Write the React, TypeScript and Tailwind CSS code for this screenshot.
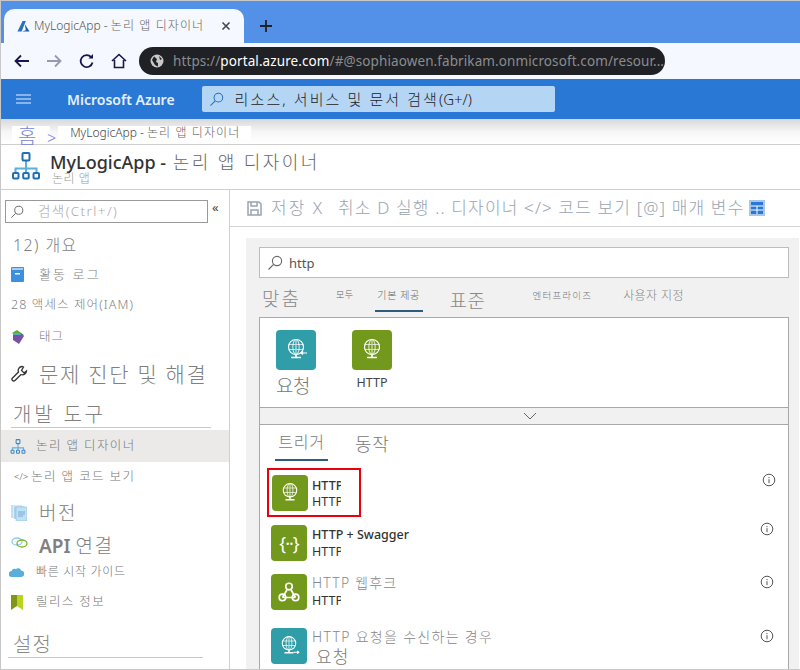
import React from "react";

const FONT = "[font-family:'Noto_Sans','Noto_Sans_CJK_KR',sans-serif]";

function Globe({ arrow, size = 40 }: { arrow?: "in" | "out"; size?: number }) {
  return (
    <svg width={size} height={size} viewBox="0 0 40 40" fill="none" stroke="#fff" strokeWidth="1.200">
      <circle cx="20" cy="17" r="7.500" />
      <ellipse cx="20" cy="17" rx="3.200" ry="7.500" strokeOpacity="0.700" />
      <path d="M12.800 14.500h14.400M12.800 19.500h14.400M20 9.500v15" strokeOpacity="0.700" />
      <path d="M20 24.500v3M15 27.500h10" strokeWidth="1.600" />
      {arrow === "in" && <path d="M31 23h-6m2-1.500L25 23l2 1.500" />}
      {arrow === "out" && <path d="M25 27h6m-2-1.500l2 1.500-2 1.500" />}
    </svg>
  );
}

function Tile({ color, size, children }: { color: string; size: "lg" | "md"; children: React.ReactNode }) {
  const cls = size === "lg" ? "w-10 h-10" : "w-9 h-9";
  return (
    <div className={`${cls} shrink-0 rounded-sm flex items-center justify-center`} style={{ backgroundColor: color }}>
      {children}
    </div>
  );
}

function LogicIcon({ size, stroke = "#1f6fb5" }: { size: number; stroke?: string }) {
  return (
    <svg width={size} height={size} viewBox="0 0 30 30" fill="none">
      <path d="M15 11v7M4.500 23v-4.500h21V23M15 18v5" stroke="#5bb0d8" strokeWidth="2" />
      <rect x="11.500" y="3" width="7" height="7.500" rx="1" stroke={stroke} strokeWidth="2" />
      <rect x="2" y="23" width="5.500" height="5.500" rx="1" stroke={stroke} strokeWidth="2" />
      <rect x="12.200" y="23" width="5.500" height="5.500" rx="1" stroke={stroke} strokeWidth="2" />
      <rect x="22.500" y="23" width="5.500" height="5.500" rx="1" stroke={stroke} strokeWidth="2" />
    </svg>
  );
}

function InfoIcon() {
  return (
    <svg width="14" height="14" viewBox="0 0 14 14" fill="none" stroke="#555" strokeWidth="1">
      <circle cx="7" cy="7" r="5.800" />
      <path d="M7 6.200v4M7 4v1.200" />
    </svg>
  );
}

function Search({ size = 16, color = "#666" }: { size?: number; color?: string }) {
  return (
    <svg width={size} height={size} viewBox="0 0 16 16" fill="none" stroke={color} strokeWidth="1.100">
      <circle cx="10" cy="6" r="4.600" />
      <path d="M6.600 9.400 1.500 14.500" />
    </svg>
  );
}

function SideRow({ h, icon, text, cls }: { h: string; icon?: React.ReactNode; text: React.ReactNode; cls: string }) {
  return (
    <div className={`${h} flex items-center shrink-0`}>
      {icon !== undefined && <div className="w-[38px] pl-[10px] shrink-0 flex items-center">{icon}</div>}
      <span className={`${cls} whitespace-nowrap text-[#808080]`}>{text}</span>
    </div>
  );
}

export default function App() {
  return (
    <div className={`${FONT} font-light w-[800px] h-[670px] overflow-hidden bg-white flex flex-col border-t border-l border-[#c8c8c8] border-b`}>
      {/* browser tab strip */}
      <div className="h-[42px] shrink-0 bg-[#5391e8] flex items-end pl-[3px]">
        <div className="w-[240px] h-[34px] bg-[#f5f8fe] rounded-t-[10px] flex items-center pl-[13px] pr-[13px] gap-[4px]">
          <svg width="13" height="13" viewBox="0 0 14 14">
            <path d="M6 1h3.500L5 12.500H.5z" fill="#2a6fc4" />
            <path d="M8.500 4.500 13.500 12.500H5.500l4-1.500z" fill="#1a5bab" />
          </svg>
          <span className="text-[12px] text-[#555] whitespace-nowrap flex-1">MyLogicApp - <span className="tracking-[1.100px] text-[#666]">논리 앱 디자이너</span></span>
          <svg width="10" height="10" viewBox="0 0 10 10" stroke="#445" strokeWidth="1.600">
            <path d="M1.500 1.500l7 7M8.500 1.500l-7 7" />
          </svg>
        </div>
        <svg className="ml-[15px] mb-[10px]" width="14" height="14" viewBox="0 0 14 14" stroke="#222" strokeWidth="1.800">
          <path d="M7 1v12M1 7h12" />
        </svg>
      </div>
      {/* toolbar */}
      <div className="h-[36px] shrink-0 bg-[#f5f8fe] flex items-center pl-[13px]">
        <svg width="16" height="14" viewBox="0 0 16 14" fill="none" stroke="#1b1451" strokeWidth="1.800"><path d="M15 7H2m5-5.500L1.500 7 7 12.500" /></svg>
        <svg className="ml-[16px]" width="16" height="14" viewBox="0 0 16 14" fill="none" stroke="#9a97b5" strokeWidth="1.800"><path d="M1 7h13M9 1.500 14.500 7 9 12.500" /></svg>
        <svg className="ml-[17px]" width="16" height="16" viewBox="0 0 16 16" fill="none" stroke="#1b1451" strokeWidth="1.800"><path d="M13.500 9.500a6 6 0 1 1-1.300-5.300" /><path d="M14 1v4.500H9.500z" fill="#1b1451" stroke="none" /></svg>
        <svg className="ml-[16px]" width="16" height="16" viewBox="0 0 16 16" fill="none" stroke="#1b1451" strokeWidth="1.600"><path d="M1 8 8 1.500 15 8M3.500 7v7.500h9V7" /></svg>
        <div className="ml-[12px] w-[526px] h-[28px] bg-[#202124] rounded-[14px] flex items-center pl-[11px] gap-[9px] font-normal">
          <svg width="14" height="14" viewBox="0 0 14 14"><circle cx="7" cy="7" r="6.500" fill="#c8c8c8" /><path d="M4 2.500 7 5l-1 3 2 1 0 3.500L5 11 2 6zM9 2l3 3-2 1z" fill="#202124" /></svg>
          <span className="text-[13.500px] text-[#8a8c90] whitespace-nowrap tracking-[0.100px]">https://<span className="text-white">portal.azure.com</span>/#@sophiaowen.fabrikam.onmicrosoft.com/resour...</span>
        </div>
      </div>
      {/* azure bar */}
      <div className="h-[40px] shrink-0 bg-[#2a78d6] flex items-center pl-[15px]">
        <svg width="15" height="12" viewBox="0 0 15 12" stroke="#a8c9f0" strokeWidth="1.400"><path d="M0 2h15M0 6h15M0 10h15" /></svg>
        <span className="ml-[36px] text-[14px] font-semibold text-[#e4effb] whitespace-nowrap">Microsoft Azure</span>
        <div className="ml-[27px] w-[353px] h-[26px] bg-[#b5d5f4] rounded-[2px] flex items-center pl-[7px] gap-[11px]">
          <Search size={15} color="#2a6fc4" />
          <span className="text-[15px] text-[#222] whitespace-nowrap tracking-[2.100px]">리소스, 서비스 및 문서 검색<span className="text-[15px] tracking-normal">(G+/)</span></span>
        </div>
      </div>
      {/* breadcrumb */}
      <div className="h-[26px] shrink-0 bg-gradient-to-b from-[#d8d8d8] via-[#f6f6f6] to-white flex items-start pl-[11px] pt-[7px] border-b border-[#cfcfcf]">
        <span className="bg-white w-[38px] h-[18px] text-[20px] leading-[22px] text-[#7a86d8] pl-[6px] overflow-visible">홈</span>
        <span className="text-[16px] leading-[20px] text-[#7a86d8] -ml-[3px] mt-[2px]">&gt;</span>
        <span className="bg-white ml-[2px] h-[14px] text-[12px] leading-[14px] text-[#444] whitespace-nowrap pl-[12px] pr-[11px]">MyLogicApp - <span className="tracking-[1.100px] text-[#666]">논리 앱 디자이너</span></span>
      </div>
      {/* title */}
      <div className="h-[45px] shrink-0 border-b border-[#cfcfcf] flex pl-[10px] pt-[5px]">
        <LogicIcon size={30} />
        <div className="ml-[9px] flex flex-col">
          <div className="text-[18px] leading-[20px] mt-[2px] whitespace-nowrap text-[#333]">
            <span className="font-medium">MyLogicApp -</span> <span className="text-[#666] tracking-[2.400px] ml-[2px]">논리 앱 디자이너</span>
          </div>
          <div className="text-[12px] leading-[14px] text-[#999] ml-[2px] tracking-[0.500px]">논리 앱</div>
        </div>
      </div>
      {/* body */}
      <div className="flex flex-1 min-h-0">
        {/* sidebar */}
        <div className="w-[229px] shrink-0 border-r border-[#d0d0d0] flex flex-col">
          <div className="flex pl-[4px] pt-[10px] h-[40px] shrink-0">
            <div className="w-[203px] h-[23px] border border-[#999] flex items-center pl-[4px] gap-[14px]">
              <Search size={14} />
              <span className="text-[13.500px] text-[#aaa] whitespace-nowrap tracking-[1.400px]">검색(Ctrl+/)</span>
            </div>
            <span className="ml-[4px] text-[13px] leading-[14px] text-[#444] font-normal">«</span>
          </div>
          <div className="pl-[12px]"><SideRow h="h-[30px]" text="12) 개요" cls="text-[16px] tracking-[1.400px]" /></div>
          <SideRow h="h-[29px]" text="활동 로그" cls="text-[13px] tracking-[2.100px]" icon={
            <svg width="13" height="15" viewBox="0 0 13 15"><rect width="13" height="15" rx="1" fill="#3d8fe0" /><rect x="1" y="1" width="11" height="2" fill="#a9cdf2" /><rect x="4" y="6" width="5" height="1.500" fill="#fff" /></svg>
          } />
          <div className="pl-[10px]"><SideRow h="h-[33px]" text="28 액세스 제어(IAM)" cls="text-[12.500px] tracking-[1.100px]" /></div>
          <SideRow h="h-[30px]" text="태그" cls="text-[12.500px] tracking-[1px]" icon={
            <svg width="14" height="15" viewBox="0 0 14 15"><path d="M6 0 13 5 8 8 1 3z" fill="#6aa82c" /><path d="M2 3h8l3 3-5 8-6-4z" fill="#7a4fa8" /><path d="M2 3l7 0 1 2H2z" fill="#4fb0c0" /></svg>
          } />
          <SideRow h="h-[42px]" text="문제 진단 및 해결" cls="text-[21px] tracking-[1.700px] mt-[4px]" icon={
            <svg width="17" height="17" viewBox="0 0 17 17" fill="none" stroke="#333" strokeWidth="1.300"><path d="M11 1.500a4 4 0 0 0-3.500 5.500L1.500 13a1.700 1.700 0 0 0 2.500 2.500l6-6A4 4 0 0 0 15.500 6L13 8 10.500 5.500l2-3.500z" /></svg>
          } />
          <div className="pl-[12px] h-[34px] shrink-0 flex flex-col justify-end mr-[18px]">
            <div className="text-[20px] leading-[24px] text-[#808080] whitespace-nowrap tracking-[2.800px]">개발 도구</div>
            <div className="h-[1px] bg-[#c8c8c8] -ml-[2px]" />
          </div>
          <div className="h-[32px] mt-[2px] shrink-0 bg-[#eceae8] flex items-center pl-[9px] gap-[10px]">
            <LogicIcon size={16} stroke="#3d85c6" />
            <span className="text-[12.500px] text-[#777] whitespace-nowrap tracking-[1.400px]">논리 앱 디자이너</span>
          </div>
          <div className="h-[30px] shrink-0 flex items-center pl-[13px] gap-[3px]">
            <span className="text-[9.500px] text-[#666]">&lt;/&gt;</span>
            <span className="text-[12.500px] text-[#777] whitespace-nowrap tracking-[1.400px]">논리 앱 코드 보기</span>
          </div>
          <SideRow h="h-[42px]" text="버전" cls="text-[19px] tracking-[1.500px]" icon={
            <svg width="16" height="16" viewBox="0 0 16 16"><rect width="11" height="13" fill="#c4dff3" /><rect x="2.500" y="1" width="11" height="13" fill="#a9d3ee" stroke="#fff" strokeWidth="0.500" /><rect x="5" y="2" width="11" height="14" fill="#bfe1f5" stroke="#7fbde4" strokeWidth="0.500" /><path d="M7 7h7M7 9h7M7 11h5" stroke="#7fa9c9" /></svg>
          } />
          <SideRow h="h-[25px]" text={<><span className="font-semibold">API</span> <span className="tracking-[1.500px]">연결</span></>} cls="text-[19px]" icon={
            <svg className="-mt-[8px]" width="17" height="11" viewBox="0 0 17 11" fill="none" strokeWidth="1.300"><ellipse cx="6" cy="4.500" rx="5" ry="3.500" stroke="#8ecbee" /><ellipse cx="11" cy="6.500" rx="5" ry="3.500" stroke="#7ab52e" /></svg>
          } />
          <div className="h-[25px] shrink-0 flex items-center pl-[8px] gap-[12px]">
            <svg width="15" height="11" viewBox="0 0 15 11"><path d="M3 11a3 3 0 0 1-.5-6A3.500 3.500 0 0 1 7 3a3 3 0 0 1 5 1.500A3.200 3.200 0 0 1 12 11z" fill="#5aaedb" /></svg>
            <span className="text-[12px] text-[#777] whitespace-nowrap tracking-[0.700px]">빠른 시작 가이드</span>
          </div>
          <div className="h-[36px] shrink-0 flex items-center pl-[10px] gap-[13px]">
            <svg width="12" height="15" viewBox="0 0 12 15"><path d="M0 0h6v15l-6 0z" fill="#7f9618" /><path d="M6 0h6v15L6 11z" fill="#b9d31f" /><path d="M0 15l6-4v4z" fill="#fff" /></svg>
            <span className="text-[12.500px] text-[#777] whitespace-nowrap tracking-[1.400px]">릴리스 정보</span>
          </div>
          <div className="ml-[7px] mr-[26px] mt-[12px] text-[20px] leading-[25px] text-[#888] pl-[5px] border-b border-[#c8c8c8] tracking-[1px]">설정</div>
        </div>
        {/* main */}
        <div className="flex-1 min-w-0 flex flex-col">
          <div className="h-[37px] shrink-0 border-b border-[#d4d4d4] flex items-center pl-[17px] gap-[9px] text-[17px] text-[#98a4b2] whitespace-nowrap">
            <svg width="15" height="15" viewBox="0 0 15 15" fill="none" stroke="#98a4b2" strokeWidth="1.500"><path d="M1 1h11l2 2v11H1zM4 1v4h6V1M4 14V9h7v5" /></svg>
            <span className="tracking-[2px]">저장 X</span>
            <span className="ml-[5px] tracking-[1.150px] -mr-[4px]">취소 D 실행 .. 디자이너 &lt;/&gt; 코드 보기 [@] 매개 변수</span>
            <svg width="16" height="16" viewBox="0 0 16 16"><rect width="16" height="16" fill="#a9c6e8" /><rect x="2" y="2" width="12" height="12" fill="#2a78d6" /><path d="M2 6h12M2 10h12M8 6v8" stroke="#fff" /></svg>
          </div>
          <div className="flex-1 min-h-0 pl-[16px] pr-[1px] pt-[11px]">
            <div className="h-full bg-[#f1f1f1] pl-[13px] pr-[10px] pt-[9px] flex flex-col">
              <div className="h-[31px] shrink-0 bg-white border border-[#bdbdbd] flex items-center pl-[7px] gap-[6px]">
                <Search size={16} />
                <span className="text-[13px] text-[#555] font-normal mt-[3px]">http</span>
              </div>
              {/* tabs */}
              <div className="h-[39px] shrink-0 flex items-start text-[#888] whitespace-nowrap">
                <span className="text-[19px] leading-[28px] mt-[7px] ml-[3px] tracking-[2px]">맞춤</span>
                <span className="text-[9px] leading-[13px] text-[#666] mt-[10px] ml-[35px] tracking-[0.500px]">모두</span>
                <div className="ml-[21px] w-[48px] h-[34px] border-b-2 border-[#2d5c7f] text-center text-[10px] leading-[13px] text-[#666] pt-[11px] tracking-[0.600px]">기본 제공</div>
                <span className="text-[19px] leading-[28px] mt-[9px] ml-[27px] tracking-[0.500px]">표준</span>
                <span className="text-[9.500px] leading-[13px] text-[#777] mt-[11px] ml-[47px] tracking-[1.200px]">엔터프라이즈</span>
                <span className="text-[12px] leading-[16px] text-[#888] mt-[10px] ml-[31px] tracking-[0.400px]">사용자 지정</span>
              </div>
              {/* results */}
              <div className="flex-1 min-h-0 bg-white border border-b-0 border-[#a8a8a8] flex flex-col">
                <div className="h-[89px] shrink-0 flex pl-[16px] pt-[12px] gap-[36px]">
                  <div className="w-[40px] flex flex-col items-start">
                    <Tile color="#2f9ea8" size="lg"><Globe arrow="in" /></Tile>
                    <span className="text-[19px] leading-[24px] mt-[4px] text-[#777] whitespace-nowrap -tracking-[0.500px]">요청</span>
                  </div>
                  <div className="w-[40px] flex flex-col items-center">
                    <Tile color="#72991b" size="lg"><Globe /></Tile>
                    <span className="text-[12.500px] leading-[16px] mt-[5px] text-[#444] whitespace-nowrap font-normal">HTTP</span>
                  </div>
                </div>
                <div className="h-[18px] shrink-0 bg-[#f1f1f1] border-y border-[#a8a8a8] flex items-center pl-[263px]">
                  <svg width="14" height="8" viewBox="0 0 14 8" fill="none" stroke="#666"><path d="M1 1l6 6 6-6" /></svg>
                </div>
                <div className="h-[36px] shrink-0 flex pl-[15px] gap-[27px] text-[#777] whitespace-nowrap">
                  <div className="w-[53px] h-[36px] border-b-2 border-[#2d5c7f] text-[16px] leading-[34px] text-center tracking-[0.800px]">트리거</div>
                  <div className="leading-[38px] text-[18px] tracking-[0.800px]">동작</div>
                </div>
                <div className="pl-[7px] pt-[7px] pr-[12px] flex flex-col">
                  <div className="h-[49px] w-[94px] border-2 border-[#e8000d] flex items-center pl-[3px] gap-[4px] relative shrink-0">
                    <Tile color="#72991b" size="md"><Globe size={36} /></Tile>
                    <div className="text-[12.500px] leading-[16px] text-[#333] w-[29px] overflow-hidden font-normal mt-[2px]">
                      <div className="font-medium">HTTP</div>
                      <div>HTTP</div>
                    </div>
                    <div className="absolute left-[493px] top-[3px]"><InfoIcon /></div>
                  </div>
                  <div className="h-[36px] mt-[8px] flex items-start pl-[4px] gap-[5px] relative shrink-0">
                    <Tile color="#72991b" size="md"><span className="text-white text-[18px] font-normal leading-none tracking-[-1px]">{"{··}"}</span></Tile>
                    <div className="text-[12.500px] leading-[17px] text-[#333] font-normal mt-[1px]">
                      <div className="font-medium">HTTP + Swagger</div>
                      <div className="w-[29px] overflow-hidden">HTTP</div>
                    </div>
                    <div className="absolute right-[2px] top-[-3px]"><InfoIcon /></div>
                  </div>
                  <div className="h-[36px] mt-[13px] flex items-start pl-[4px] gap-[5px] relative shrink-0">
                    <Tile color="#72991b" size="md">
                      <svg width="24" height="24" viewBox="0 0 22 22" fill="none" stroke="#fff" strokeWidth="1.500"><circle cx="11" cy="6" r="3" /><circle cx="5" cy="16" r="3" /><circle cx="17" cy="16" r="3" /><path d="M9.500 8.500 5 16M12.500 8.500 17 16M5 16h12" /></svg>
                    </Tile>
                    <div>
                      <div className="text-[14px] leading-[18px] text-[#888] whitespace-nowrap tracking-[1.200px]">HTTP 웹후크</div>
                      <div className="text-[12.500px] leading-[17px] text-[#333] w-[29px] overflow-hidden font-normal">HTTP</div>
                    </div>
                    <div className="absolute right-[2px] top-[1px]"><InfoIcon /></div>
                  </div>
                  <div className="h-[36px] mt-[18px] flex items-start pl-[4px] gap-[5px] relative shrink-0">
                    <Tile color="#2f9ea8" size="md"><Globe arrow="out" size={36} /></Tile>
                    <div>
                      <div className="text-[14px] leading-[18px] text-[#888] whitespace-nowrap tracking-[1.300px]">HTTP 요청을 수신하는 경우</div>
                      <div className="text-[17px] leading-[22px] text-[#777] ml-[4px] whitespace-nowrap tracking-[1px]">요청</div>
                    </div>
                    <div className="absolute right-[2px] top-[1px]"><InfoIcon /></div>
                  </div>
                </div>
              </div>
            </div>
          </div>
        </div>
      </div>
    </div>
  );
}
